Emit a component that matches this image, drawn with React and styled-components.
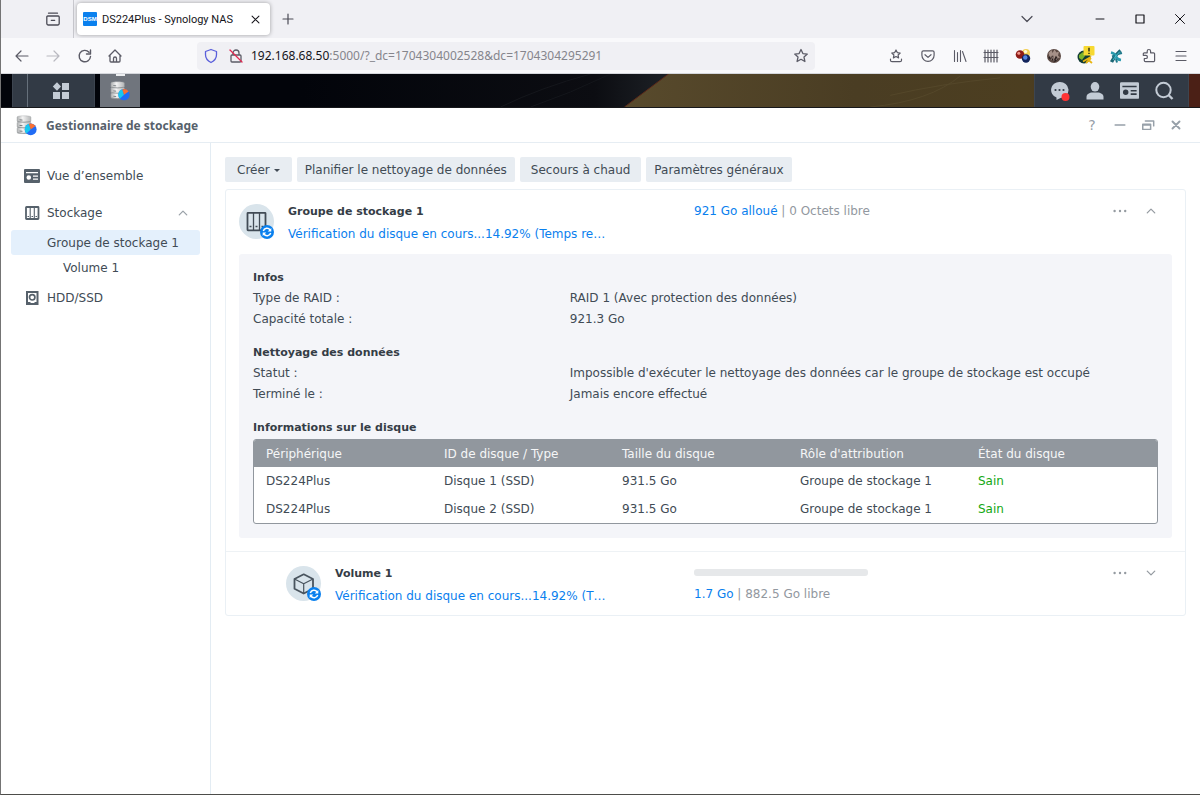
import React, {useState} from 'react';
import styled, {createGlobalStyle} from 'styled-components';

const GlobalStyle = createGlobalStyle`
    * {
        box-sizing: border-box;
    }
    body {
        margin: 0;
        background-color: white;
    }
    button {
        font: inherit;
        color: inherit;
        border: none;
        padding: 0;
        background: none;
        cursor: pointer;
    }
    svg {
        display: block;
        flex: none;
    }
`;

const Page = styled.div`
    display: flex;
    flex-direction: column;
    min-height: 100vh;
    border-left: 1px solid #747474;
    border-bottom: 1px solid #4d4d4a;
    font-family: 'DejaVu Sans', Verdana, sans-serif;
    font-size: 12px;
    line-height: 21px;
    color: #414b55;
`;

const TabBar = styled.header`
    display: flex;
    align-items: center;
    height: 38px;
    background-color: #f0f0f4;
    color: #4b4b55;
`;

const IconButton = styled.button`
    display: flex;
    align-items: center;
    justify-content: center;
    flex: none;
    width: ${props => props.$width || 32}px;
    height: 28px;
    color: ${props => props.$color || 'inherit'};
`;

const ViewButton = styled(IconButton)`
    align-self: stretch;
    height: auto;
    width: 73px;
    padding-left: 32px;
    border-right: 1px solid #c9c9cf;
`;

const Tab = styled.div`
    display: flex;
    align-items: center;
    width: 193px;
    height: 32px;
    margin: 0 2px 0 3px;
    padding: 0 5px 0 6px;
    border-radius: 4px;
    background-color: white;
    box-shadow: 0 0 4px rgba(0, 0, 0, 0.35);
    color: #15141a;
    font-family: Roboto, 'Noto Sans', sans-serif;
    font-size: 11px;
`;

const Favicon = styled.span`
    width: 14px;
    height: 14px;
    margin-right: 5px;
    border-radius: 1px;
    background-color: #0a80ee;
    color: white;
    font-family: 'Liberation Sans', sans-serif;
    font-size: 6px;
    font-weight: bold;
    line-height: 14px;
    text-align: center;
`;

const TabTitle = styled.span`
    flex: 1;
    white-space: nowrap;
`;

const Spacer = styled.div`
    flex: 1;
`;

const WindowControls = styled.div`
    display: flex;
    margin-left: 36px;
    color: #15141a;
`;

const Toolbar = styled.div`
    display: flex;
    align-items: center;
    height: 36px;
    padding: 0 6px 0 5px;
    border-bottom: 1px solid #d5d7dc;
    background-color: #f9f9fb;
    color: #5b5b66;
    font-family: 'Noto Sans', sans-serif;
`;

const AddressBar = styled.div`
    display: flex;
    align-items: center;
    flex: 1;
    height: 28px;
    margin: 0 65px 0 67px;
    border-radius: 4px;
    background-color: #f0f0f4;
`;

const Address = styled.div`
    flex: 1;
    margin-left: 4px;
    color: #85858c;
    white-space: nowrap;
`;

const Host = styled.span`
    color: #15141a;
`;

const Taskbar = styled.div`
    position: relative;
    display: flex;
    height: 34px;
    padding: 0 11px;
    border-bottom: 1px solid #17181b;
    background-color: #02040a;
`;

const Wallpaper = styled.svg`
    position: absolute;
    inset: 0;
    width: 100%;
    height: 100%;
`;

const TaskGroup = styled.div`
    position: relative;
    display: flex;
    align-items: center;
    padding: ${props => props.$padding || '0'};
    background-color: #323a45;
    border-left: 1px solid #3d4550;
    border-right: 1px solid #3d4550;
    color: #c3cbd5;
`;

const MenuButton = styled.button`
    display: flex;
    align-items: center;
    justify-content: center;
    width: 67px;
    height: 33px;
    margin-left: 14px;
    border-left: 1px solid #66707b;
`;

const RunningApp = styled.button`
    position: relative;
    display: flex;
    align-items: center;
    justify-content: center;
    width: 40px;
    height: 33px;
    margin-left: 5px;
    background-color: #70757d;
    &::before {
        content: '';
        position: absolute;
        top: 0;
        width: 9px;
        height: 2px;
        background-color: #eceef0;
    }
`;

const TitleBar = styled.div`
    display: flex;
    align-items: center;
    height: 35px;
    padding: 0 10px 0 15px;
    border-bottom: 1px solid #e6edf3;
    color: #97a0a9;
`;

const WindowTitle = styled.h1`
    flex: 1;
    margin: 0 0 0 9px;
    font-family: 'Noto Sans', sans-serif;
    font-size: 12px;
    font-weight: bold;
    color: #56616b;
`;

const HelpButton = styled(IconButton)`
    font-size: 14px;
`;

const Body = styled.div`
    display: flex;
    flex: 1;
`;

const Sidebar = styled.nav`
    display: flex;
    flex-direction: column;
    flex: none;
    width: 210px;
    padding: 20px 10px;
    border-right: 1px solid #e3ecf3;
`;

const NavLink = styled.a`
    display: flex;
    align-items: center;
    height: 25px;
    margin-top: ${props => props.$gap || 0}px;
    padding-top: 1px;
    padding-left: ${props => props.$indent || 13}px;
    padding-right: 11px;
    border-radius: 3px;
    background-color: ${props => (props.$selected ? '#e4f0fc' : 'transparent')};
    color: inherit;
    text-decoration: none;
    svg {
        color: #56616b;
    }
    svg:last-child {
        color: #9aa1a8;
    }
`;

const NavText = styled.span`
    flex: 1;
    margin-left: ${props => (props.$icon ? 7 : 0)}px;
`;

const Main = styled.main`
    flex: 1;
    min-width: 0;
    padding: 14px;
`;

const Actions = styled.div`
    display: flex;
    gap: 5px;
    margin-bottom: 7px;
`;

const ActionButton = styled.button`
    display: flex;
    align-items: center;
    gap: 4px;
    height: 25px;
    padding: 1px ${props => props.$padding || 8}px 0;
    border-radius: 2px;
    background-color: #e8edf2;
    white-space: nowrap;
`;

const Panel = styled.section`
    border: 1px solid #eaf0f5;
    border-radius: 3px;
`;

const PoolHeader = styled.div`
    display: flex;
    align-items: flex-start;
    height: 64px;
    padding: 11px 20px 0 ${props => props.$indent || 13}px;
    border-top: ${props => (props.$divided ? '1px solid #eef2f5' : 'none')};
`;

const Badge = styled.div`
    flex: none;
    margin: 3px 13px 0 0;
`;

const Identity = styled.div`
    flex: none;
    width: ${props => props.$width}px;
`;

const Name = styled.h2`
    margin: 0 0 2px;
    font-size: 11px;
    font-weight: bold;
    line-height: 21px;
    color: #353d46;
`;

const StatusLink = styled.a`
    color: #0a80ee;
    text-decoration: none;
    white-space: nowrap;
`;

const Usage = styled.div`
    flex: 1;
    color: #9298a0;
`;

const Used = styled.span`
    color: #0a80ee;
`;

const UsageTrack = styled.div`
    width: 174px;
    height: 7px;
    margin: 6px 0 8px;
    border-radius: 3px;
    background-color: #e6e8ea;
`;

const PoolActions = styled.div`
    display: flex;
    align-items: center;
    height: 20px;
    color: #959ba1;
`;

const Details = styled.div`
    margin: 0 13px 13px;
    padding: 13px 14px 14px;
    border-radius: 3px;
    background-color: #f4f5f9;
`;

const InfoSection = styled.div`
    margin-bottom: 12px;
`;

const SectionTitle = styled.h3`
    margin: 0;
    font-size: 11px;
    font-weight: bold;
    line-height: 21px;
    color: #353d46;
`;

const InfoRow = styled.div`
    display: grid;
    grid-template-columns: 35% 65%;
`;

const TableFrame = styled.div`
    margin-top: 1px;
    border: 1px solid #91979e;
    border-radius: 3px;
    overflow: hidden;
    background-color: white;
`;

const DiskTable = styled.table`
    width: 100%;
    table-layout: fixed;
    border-collapse: collapse;
`;

const Th = styled.th`
    width: ${props => (props.$last ? 'auto' : '178px')};
    height: 27px;
    padding: 1px 0 0 12px;
    background-color: #91979e;
    color: #f5f6f7;
    font-weight: normal;
    text-align: left;
`;

const Td = styled.td`
    height: ${props => (props.$last ? 27 : 28)}px;
    padding: 0 0 0 12px;
    color: ${props => (props.$healthy ? '#13a813' : 'inherit')};
`;

const disks = [
    {id: 1, device: 'DS224Plus', disk: 'Disque 1 (SSD)', size: '931.5 Go', role: 'Groupe de stockage 1', state: 'Sain'},
    {id: 2, device: 'DS224Plus', disk: 'Disque 2 (SSD)', size: '931.5 Go', role: 'Groupe de stockage 1', state: 'Sain'},
];

const columns = ['Périphérique', 'ID de disque / Type', 'Taille du disque', "Rôle d'attribution", 'État du disque'];

const Line = ({size = 16, width = 1.2, children}) => (
    <svg width={size} height={size} viewBox="0 0 16 16" fill="none" stroke="currentColor" strokeWidth={width} strokeLinecap="round" strokeLinejoin="round" aria-hidden="true">
        {children}
    </svg>
);

const Chevron = ({up, size = 12}) => (
    <Line size={size} width={1.7}><path d={up ? 'M3 10.5 8 5.5l5 5' : 'M3 5.5l5 5 5-5'} /></Line>
);

const Dots = () => (
    <svg width="14" height="4" viewBox="0 0 14 4" fill="currentColor" aria-hidden="true">
        <circle cx="1.6" cy="2" r="1.2" /><circle cx="7" cy="2" r="1.2" /><circle cx="12.2" cy="2" r="1.2" />
    </svg>
);

const StorageLogo = ({size = 20}) => (
    <svg width={size} height={size} viewBox="0 0 21 21" aria-hidden="true">
        <defs>
            <linearGradient id="metal">
                <stop offset="0" stopColor="#aeb0b1" />
                <stop offset="0.4" stopColor="#f4f4f4" />
                <stop offset="1" stopColor="#b4b6b7" />
            </linearGradient>
        </defs>
        {[13.2, 7.6, 2].map(y => (
            <g key={y}>
                <path d={`M1 ${y}c0-1.600 14-1.600 14 0v4.200c0 1.600-14 1.600-14 0z`} fill="url(#metal)" stroke="#a3a6a8" strokeWidth="0.4" />
                <path d={`M1.500 ${y + 4.6}q6.500 1.200 13 0`} stroke="#85898c" strokeWidth="0.7" fill="none" />
                <path d={`M3.500 ${y + 2.8}l3 .3`} stroke="#6c7176" strokeWidth="0.9" />
            </g>
        ))}
        <circle cx="14.7" cy="14.4" r="5.9" fill="#216cf5" />
        <path d="M14.700 14.400 10.500 18.500a5.900 5.900 0 0 1 2.400-9.800z" fill="#18c8ef" />
        <path d="M14.700 14.400 12.900 8.800a5.900 5.900 0 0 1 6.600 2.200z" fill="#fb7132" />
    </svg>
);

const OverviewIcon = ({size = 16}) => (
    <svg width={size} height={size} viewBox="0 0 16 16" aria-hidden="true">
        <path fillRule="evenodd" fill="currentColor" d="M1 1h14a1 1 0 0 1 1 1v12a1 1 0 0 1-1 1H1a1 1 0 0 1-1-1V2a1 1 0 0 1 1-1zM2 4v1.200h12V4zM4.800 7.200a2.300 2.300 0 1 0 0 4.600 2.300 2.300 0 0 0 0-4.600zM9 7.500v1.300h5V7.500zM9 10.400v1.300h5v-1.300z" />
    </svg>
);

const BaysIcon = () => (
    <svg width="16" height="16" viewBox="0 0 16 16" fill="none" stroke="currentColor" aria-hidden="true">
        <rect x="2" y="2" width="12.500" height="12" rx="0.500" strokeWidth="1.800" />
        <path d="M6.200 2v12M10.300 2v12" strokeWidth="1.100" />
        <path d="M3.500 11.500h1.500M7.500 11.500h1.500M11.500 11.500h1.500" strokeWidth="1.100" />
    </svg>
);

const DiskIcon = () => (
    <svg width="16" height="16" viewBox="0 0 16 16" fill="none" stroke="currentColor" aria-hidden="true">
        <rect x="3" y="2" width="10.500" height="12" strokeWidth="2" />
        <circle cx="8.200" cy="7.300" r="2.700" strokeWidth="1.700" />
        <path d="M4 12.500h2.500M10.500 12.500h2.500" strokeWidth="1.200" />
    </svg>
);

const StatusBadge = ({volume}) => (
    <svg width="36" height="36" viewBox="0 0 36 36" fill="none" aria-hidden="true">
        <circle cx="17.500" cy="17.500" r="17.500" fill="#d9e4eb" />
        {volume ? (
            <g stroke="#49545e" strokeLinejoin="round">
                <path d="M17.700 8.300 27 13v9.700L17.700 27.500 8.500 22.700V13z" strokeWidth="1.800" />
                <path d="M8.500 13l9.200 4.700L27 13M17.700 17.700v9.800" strokeWidth="1.200" />
            </g>
        ) : (
            <g stroke="#414b55">
                <rect x="8.500" y="8.800" width="18" height="17.500" rx="0.500" strokeWidth="1.800" />
                <path d="M14.500 9v17M20.500 9v17" strokeWidth="1.300" />
                <path d="M10.500 22.500h2M16.500 22.500h2M22.500 22.500h2" strokeWidth="1.400" />
            </g>
        )}
        <circle cx="28" cy="28" r="7" fill="#0a80ee" />
        <path d="M24.300 27a3.800 3.800 0 0 1 6.800-1M31.700 29a3.800 3.800 0 0 1-6.800 1" stroke="white" strokeWidth="1.500" />
        <path d="M32.300 24v3.600h-3.600zM23.700 32v-3.600h3.600z" fill="white" />
    </svg>
);

const FirefoxExtensions = () => (
    <>
        <IconButton aria-label="Marque-pages">
            <Line><path d="M8 2l1.300 2.600 2.900.4-2.100 2 .5 2.900L8 8.500 5.400 9.900l.5-2.900-2.100-2 2.900-.4zM2.500 11v1.200a1.500 1.500 0 0 0 1.500 1.500h8a1.500 1.500 0 0 0 1.500-1.500V11" /></Line>
        </IconButton>
        <IconButton aria-label="Pocket">
            <Line><path d="M3.400 2.800h9.200A1.500 1.500 0 0 1 14.100 4.300v3a6.100 6.100 0 0 1-12.200 0v-3a1.500 1.500 0 0 1 1.500-1.500zM5 6.700l3 2.700 3-2.700" /></Line>
        </IconButton>
        <IconButton $width={31} aria-label="Bibliothèque">
            <Line width={1.1}><path d="M2.500 2.500v11M5.500 4.500v9M8.500 2.500v11M10.500 3.500l3.500 10" /></Line>
        </IconButton>
        <IconButton aria-label="Barrière">
            <Line width={1.2}><path d="M2 2v12M5 2v12M8 2v12M11 2v12M14 2v12M1 4.500h14M1 9.500h14" /></Line>
        </IconButton>
        <IconButton $width={31} aria-label="Billes">
            <svg width="16" height="16" viewBox="0 0 16 16">
                <circle cx="11" cy="5" r="4" fill="#f2cf56" /><circle cx="10.500" cy="3.600" r="1.700" fill="#fff9d5" />
                <circle cx="5" cy="6.500" r="4.300" fill="#8e1c18" /><circle cx="3.800" cy="5.300" r="1.500" fill="#f0978b" />
                <circle cx="11" cy="10.500" r="4.200" fill="#12245c" /><circle cx="10.300" cy="9.500" r="2.200" fill="#5285e2" />
            </svg>
        </IconButton>
        <IconButton aria-label="Profil">
            <svg width="16" height="16" viewBox="0 0 16 16">
                <circle cx="8" cy="8" r="7" fill="#5c4a44" />
                <path d="M2.500 5l3-3 1 3 2-3.500 2 3 2.500-1-1 4 2 2-3 1-1-3-2 4-2-4-2 3z" fill="#a59088" />
                <path d="M2 10l2-2 1 4 2-5 1 5 2-4 2 3-3 3-3-2z" fill="#2a2020" />
                <path d="M5 12l2-3 1 4M10 12l2-3" stroke="#8a7872" fill="none" />
            </svg>
        </IconButton>
        <IconButton aria-label="Alerte réseau">
            <svg width="20" height="20" viewBox="0 0 20 20">
                <circle cx="8" cy="11" r="6.500" fill="#123c35" />
                <path d="M3 9l4-3 2 4-3 4-3-2z" fill="#7cb42c" />
                <path d="M7 15.500l7-4-1 3 3 2.500M15 12l-5 5" stroke="#e8b513" strokeWidth="1.800" fill="none" />
                <rect x="7.500" y="0" width="11" height="9.500" rx="1" fill="#f7d932" />
                <path d="M13 1.800v3.700M13 6.700v1.300" stroke="#363610" strokeWidth="1.500" />
            </svg>
        </IconButton>
        <IconButton $width={28} aria-label="Module">
            <svg width="16" height="16" viewBox="0 0 16 16" fill="none">
                <path d="M12.500 2.500Q7 7 3.500 14" stroke="#1b6675" strokeWidth="3.400" />
                <path d="M3 4.500q4 1 5 4t5 3.500" stroke="#2b9aae" strokeWidth="2.600" />
                <path d="M4 8.500l3-1M8 11l1 3.500M10 6l4-1" stroke="#1f7b8c" strokeWidth="2" />
                <path d="M12 3.500Q8 7 5 12" stroke="#45c6d6" strokeWidth="0.900" />
            </svg>
        </IconButton>
        <IconButton $width={38} aria-label="Extensions">
            <Line><path d="M6.200 4.800V3.200a1.700 1.700 0 0 1 3.400 0v1.600h3a1 1 0 0 1 1 1v6.700a1.200 1.200 0 0 1-1.200 1.200H4.500a1.200 1.200 0 0 1-1.200-1.200v-2h1.500a1.600 1.600 0 0 0 0-3.200H2.300V5.800a1 1 0 0 1 1-1z" /></Line>
        </IconButton>
        <IconButton $width={26} aria-label="Menu">
            <Line><path d="M3 3.500h10M3 8h10M3 12.500h10" /></Line>
        </IconButton>
    </>
);

const Browser = () => (
    <>
        <TabBar>
            <ViewButton aria-label="Firefox View">
                <Line width={1.3}><path d="M3.500 2.200h9M2.800 5h10.400a1 1 0 0 1 1 1v6.500a1.500 1.500 0 0 1-1.500 1.500H3.300a1.500 1.500 0 0 1-1.500-1.500V6a1 1 0 0 1 1-1zM6.300 9.300h3.400" /></Line>
            </ViewButton>
            <Tab>
                <Favicon>DSM</Favicon>
                <TabTitle>DS224Plus - Synology NAS</TabTitle>
                <IconButton $width={20} aria-label="Fermer l'onglet"><Line size={11} width={1.5}><path d="M3 3l10 10M13 3L3 13" /></Line></IconButton>
            </Tab>
            <IconButton aria-label="Nouvel onglet"><Line><path d="M8 3v10M3 8h10" /></Line></IconButton>
            <Spacer />
            <IconButton $width={34} aria-label="Lister les onglets"><Line><path d="M3 5.500l5 5 5-5" /></Line></IconButton>
            <WindowControls>
                <IconButton $width={40} aria-label="Réduire"><Line width={1}><path d="M4 8h8" /></Line></IconButton>
                <IconButton $width={40} aria-label="Agrandir"><Line><path d="M4 4h8v8H4z" /></Line></IconButton>
                <IconButton $width={40} aria-label="Fermer"><Line width={1}><path d="M3.500 3.500l9 9M12.500 3.500l-9 9" /></Line></IconButton>
            </WindowControls>
        </TabBar>
        <Toolbar>
            <IconButton $width={31} aria-label="Précédent"><Line><path d="M14 8H2M7 3L2 8l5 5" /></Line></IconButton>
            <IconButton $width={32} $color="#b9b9c0" aria-label="Suivant"><Line><path d="M2 8h12M9 3l5 5-5 5" /></Line></IconButton>
            <IconButton $width={31} aria-label="Actualiser"><Line width={1.4}><path d="M13.500 8.500A5.700 5.700 0 1 1 12 4.200M13.500 2v4H9.500" /></Line></IconButton>
            <IconButton $width={30} aria-label="Accueil"><Line width={1.3}><path d="M2 8l6-6 6 6M3 7.500V13a1 1 0 0 0 1 1h8a1 1 0 0 0 1-1V7.500M6.500 14v-3.500a1.500 1.500 0 0 1 3 0V14" /></Line></IconButton>
            <AddressBar>
                <IconButton $width={28} $color="#5a5fdb" aria-label="Protection"><Line width={1.3}><path d="M8 1.500l5.500 2v3.300c0 3.500-2 6-5.500 7.700-3.500-1.700-5.500-4.200-5.500-7.700V3.500z" /></Line></IconButton>
                <IconButton $width={22} aria-label="Connexion non sécurisée">
                    <Line width={1.3}>
                        <path d="M5 6.500V5a3 3 0 0 1 6 0v1.500M4 7h8a1 1 0 0 1 1 1v5a1 1 0 0 1-1 1H4a1 1 0 0 1-1-1V8a1 1 0 0 1 1-1z" />
                        <path d="M2 2l12 12" stroke="#e22850" />
                    </Line>
                </IconButton>
                <Address><Host>192.168.68.50</Host>:5000/?_dc=1704304002528&amp;dc=1704304295291</Address>
                <IconButton $width={28} aria-label="Marquer cette page"><Line width={1.3}><path d="M8 1.500l1.900 4.100 4.400.5-3.300 3 .9 4.400L8 11.300l-3.900 2.200.9-4.400-3.300-3 4.400-.5z" /></Line></IconButton>
            </AddressBar>
            <FirefoxExtensions />
        </Toolbar>
    </>
);

const Desktop = () => (
    <Taskbar>
        <Wallpaper viewBox="0 0 1200 34" preserveAspectRatio="none" aria-hidden="true">
            <defs>
                <linearGradient id="sand">
                    <stop offset="0" stopColor="#584a2c" />
                    <stop offset="0.4" stopColor="#4a3d23" />
                    <stop offset="0.7" stopColor="#4c3e20" />
                    <stop offset="1" stopColor="#4b2418" />
                </linearGradient>
                <linearGradient id="night">
                    <stop offset="0" stopColor="#02040a" />
                    <stop offset="0.8" stopColor="#0c0d12" />
                    <stop offset="1" stopColor="#1d2126" />
                </linearGradient>
            </defs>
            <path d="M300 0h368l-44 34H300z" fill="url(#night)" />
            <path d="M668 0h532v34H624z" fill="url(#sand)" />
            <path d="M668 0l-44 34" stroke="#5c2a1a" />
            <path d="M500 34q40-20 90-34M530 34q40-14 80-34" stroke="#14161b" fill="none" />
            <path d="M870 34q60-6 90-32M890 22q50-12 110-18" stroke="#54472a" fill="none" />
            <path d="M1189 0h11v34h-11z" fill="#4b2016" />
        </Wallpaper>
        <TaskGroup>
            <MenuButton aria-label="Menu principal">
                <svg width="18" height="18" viewBox="0 0 18 18" fill="currentColor" aria-hidden="true">
                    <path d="M5 .3L9 4.500 5 8.700.800 4.500z" /><path d="M10 1h7v7h-7zM1 10h7v7H1zM10 10h7v7h-7z" />
                </svg>
            </MenuButton>
        </TaskGroup>
        <RunningApp aria-label="Gestionnaire de stockage"><StorageLogo /></RunningApp>
        <Spacer />
        <TaskGroup $padding="0 7px 0 7px">
            <IconButton $width={35} aria-label="Notifications">
                <svg width="20" height="20" viewBox="0 0 20 20" fill="currentColor">
                    <path d="M9.500 1a8.500 8 0 0 1 1 16l-4 2v-2.500A8.300 8 0 0 1 9.500 1z" />
                    <circle cx="5.500" cy="9" r="1.100" fill="#323a45" /><circle cx="9.500" cy="9" r="1.100" fill="#323a45" /><circle cx="13.500" cy="9" r="1.100" fill="#323a45" />
                    <circle cx="15.500" cy="16" r="4" fill="#ff3434" />
                </svg>
            </IconButton>
            <IconButton $width={35} aria-label="Utilisateur">
                <svg width="18" height="18" viewBox="0 0 18 18" fill="currentColor"><ellipse cx="9" cy="4.800" rx="4.300" ry="4.800" /><path d="M.500 17.500v-2.500c0-3 3-4.500 6-4.500h5c3 0 6 1.500 6 4.500v2.500z" /></svg>
            </IconButton>
            <IconButton $width={35} aria-label="Widgets"><OverviewIcon size={19} /></IconButton>
            <IconButton $width={34} aria-label="Rechercher">
                <svg width="20" height="20" viewBox="0 0 20 20" fill="none" stroke="currentColor" strokeWidth="2"><circle cx="9.500" cy="9" r="7.200" /><path d="M14.500 14l4 4" strokeWidth="2.400" /></svg>
            </IconButton>
        </TaskGroup>
    </Taskbar>
);

const PoolButtons = ({open, onToggle}) => (
    <PoolActions>
        <IconButton $width={32} aria-label="Plus d'actions"><Dots /></IconButton>
        <IconButton $width={29} aria-label="Afficher les détails" aria-expanded={open} onClick={onToggle}><Chevron up={open} /></IconButton>
    </PoolActions>
);

const App = () => {
    const [open, setOpen] = useState(true);

    return (
        <Page>
            <GlobalStyle />
            <Browser />
            <Desktop />
            <TitleBar>
                <StorageLogo size={21} />
                <WindowTitle>Gestionnaire de stockage</WindowTitle>
                <HelpButton $width={28} aria-label="Aide">?</HelpButton>
                <IconButton $width={28} aria-label="Réduire"><Line size={14} width={1.8}><path d="M2.500 8h11" /></Line></IconButton>
                <IconButton $width={28} aria-label="Restaurer"><Line size={14} width={1.7}><path d="M2 7h9v6H2zM2 8h9M5 3.500h9.500v5.500" /></Line></IconButton>
                <IconButton $width={28} aria-label="Fermer"><Line size={14} width={2.2}><path d="M4 4l8 8M12 4l-8 8" /></Line></IconButton>
            </TitleBar>
            <Body>
                <Sidebar>
                    <NavLink href="#overview"><OverviewIcon /><NavText $icon>Vue d’ensemble</NavText></NavLink>
                    <NavLink href="#storage" $gap={12}><BaysIcon /><NavText $icon>Stockage</NavText><Chevron up /></NavLink>
                    <NavLink href="#pool-1" $gap={5} $indent={36} $selected><NavText>Groupe de stockage 1</NavText></NavLink>
                    <NavLink href="#volume-1" $indent={52}><NavText>Volume 1</NavText></NavLink>
                    <NavLink href="#disks" $gap={5}><DiskIcon /><NavText $icon>HDD/SSD</NavText></NavLink>
                </Sidebar>
                <Main>
                    <Actions>
                        <ActionButton $padding={12}>
                            Créer
                            <svg width="6" height="3" viewBox="0 0 6 3" fill="currentColor" aria-hidden="true"><path d="M0 0h6L3 3z" /></svg>
                        </ActionButton>
                        <ActionButton>Planifier le nettoyage de données</ActionButton>
                        <ActionButton $padding={11}>Secours à chaud</ActionButton>
                        <ActionButton>Paramètres généraux</ActionButton>
                    </Actions>
                    <Panel>
                        <PoolHeader>
                            <Badge><StatusBadge /></Badge>
                            <Identity $width={406}>
                                <Name>Groupe de stockage 1</Name>
                                <StatusLink href="#check">Vérification du disque en cours...14.92% (Temps re…</StatusLink>
                            </Identity>
                            <Usage><Used>921 Go alloué</Used> | 0 Octets libre</Usage>
                            <PoolButtons open={open} onToggle={() => setOpen(!open)} />
                        </PoolHeader>
                        {open && (
                            <Details>
                                <InfoSection>
                                    <SectionTitle>Infos</SectionTitle>
                                    <InfoRow><span>Type de RAID :</span><span>RAID 1 (Avec protection des données)</span></InfoRow>
                                    <InfoRow><span>Capacité totale :</span><span>921.3 Go</span></InfoRow>
                                </InfoSection>
                                <InfoSection>
                                    <SectionTitle>Nettoyage des données</SectionTitle>
                                    <InfoRow><span>Statut :</span><span>Impossible d'exécuter le nettoyage des données car le groupe de stockage est occupé</span></InfoRow>
                                    <InfoRow><span>Terminé le :</span><span>Jamais encore effectué</span></InfoRow>
                                </InfoSection>
                                <SectionTitle>Informations sur le disque</SectionTitle>
                                <TableFrame>
                                    <DiskTable>
                                        <thead>
                                            <tr>
                                                {columns.map((title, i) => <Th key={title} $last={i === columns.length - 1}>{title}</Th>)}
                                            </tr>
                                        </thead>
                                        <tbody>
                                            {disks.map((item, i) =>
                                                <tr key={item.id}>
                                                    <Td $last={i === disks.length - 1}>{item.device}</Td>
                                                    <Td>{item.disk}</Td>
                                                    <Td>{item.size}</Td>
                                                    <Td>{item.role}</Td>
                                                    <Td $healthy>{item.state}</Td>
                                                </tr>
                                            )}
                                        </tbody>
                                    </DiskTable>
                                </TableFrame>
                            </Details>
                        )}
                        <PoolHeader $divided $indent={60}>
                            <Badge><StatusBadge volume /></Badge>
                            <Identity $width={359}>
                                <Name>Volume 1</Name>
                                <StatusLink href="#check">Vérification du disque en cours...14.92% (T…</StatusLink>
                            </Identity>
                            <Usage>
                                <UsageTrack />
                                <Used>1.7 Go</Used> | 882.5 Go libre
                            </Usage>
                            <PoolButtons open={false} />
                        </PoolHeader>
                    </Panel>
                </Main>
            </Body>
        </Page>
    )
}


export default App
